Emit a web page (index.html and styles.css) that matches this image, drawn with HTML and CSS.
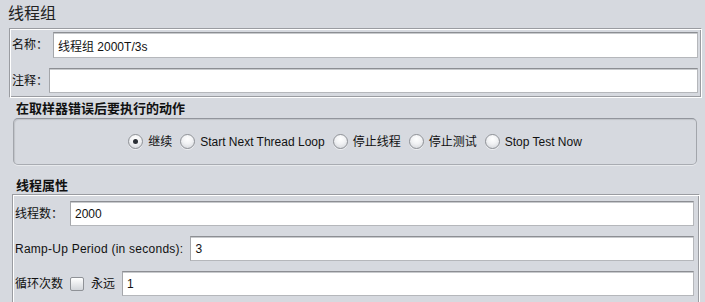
FILE: index.html
```html
<!DOCTYPE html>
<html lang="zh-CN">
<head>
<meta charset="utf-8">
<title>线程组</title>
<link rel="stylesheet" href="styles.css">
</head>
<body>
<div class="page">
  <div class="title">线程组</div>

  <div class="etched box-top">
    <div class="row row-name">
      <span class="label">名称：</span>
      <div class="field field-tall">线程组 2000T/3s</div>
    </div>
    <div class="row row-comment">
      <span class="label">注释：</span>
      <div class="field"></div>
    </div>
  </div>

  <div class="section-title first">在取样器错误后要执行的动作</div>
  <div class="titled-panel">
    <label class="radio-item"><span class="radio checked"></span><span class="rtext">继续</span></label>
    <label class="radio-item"><span class="radio"></span><span class="rtext">Start Next Thread Loop</span></label>
    <label class="radio-item"><span class="radio"></span><span class="rtext">停止线程</span></label>
    <label class="radio-item"><span class="radio"></span><span class="rtext">停止测试</span></label>
    <label class="radio-item"><span class="radio"></span><span class="rtext">Stop Test Now</span></label>
  </div>

  <div class="section-title second">线程属性</div>
  <div class="etched box-props">
    <div class="row">
      <span class="label">线程数：</span>
      <div class="field">2000</div>
    </div>
    <div class="row">
      <span class="label label-wide">Ramp-Up Period (in seconds):</span>
      <div class="field">3</div>
    </div>
    <div class="row">
      <span class="label">循环次数</span>
      <span class="checkbox"></span>
      <span class="label">永远</span>
      <div class="field">1</div>
    </div>
  </div>
</div>
</body>
</html>
```

FILE: styles.css
```css
html, body {
  margin: 0;
  padding: 0;
  background: #d6d9df;
  overflow: hidden;
}

body {
  font-family: "Liberation Sans", "Noto Sans CJK SC", sans-serif;
  font-size: 12px;
  color: #111;
  width: 705px;
  height: 302px;
}

.page {
  display: flex;
  flex-direction: column;
}

.title {
  height: 28px;
  line-height: 24px;
  padding-left: 8px;
  font-family: "Noto Sans CJK SC", sans-serif;
  font-size: 16px;
  color: #222;
}

.etched {
  border: 1px solid;
  border-color: #9a9ca1 #ffffff #ffffff #9a9ca1;
  box-shadow: inset 1px 1px 0 #ffffff, inset -1px -1px 0 #9a9ca1;
}

.box-top {
  margin: 0 3px 0 9px;
  padding: 3px 3px 4px 2px;
  display: flex;
  flex-direction: column;
  gap: 10px;
}

.row {
  display: flex;
  align-items: center;
  gap: 7px;
  height: 25px;
}

.row-name { height: 26px; gap: 5px; }
.row-comment { gap: 1px; }

.label {
  white-space: nowrap;
  line-height: 16px;
}

.label-wide { letter-spacing: 0.25px; }

.field {
  flex: 1;
  align-self: stretch;
  background: #ffffff;
  border: 1px solid #b5b7bb;
  border-top-color: #8c8e93;
  border-left-color: #a4a6aa;
  box-shadow: inset 0 1px 0 #c8cacd;
  padding: 0 4px;
  display: flex;
  align-items: center;
  white-space: nowrap;
  color: #111;
}

.section-title {
  padding-left: 16px;
  height: 16px;
  line-height: 16px;
  font-weight: bold;
  font-size: 13px;
  color: #111;
}

.section-title.first { margin-top: 3px; margin-bottom: 1px; }
.section-title.second { margin-top: 13px; margin-bottom: 0; }

.titled-panel {
  margin: 0 8px 0 13px;
  height: 45px;
  border: 1px solid #a2a5ab;
  border-top-color: #92959c;
  border-bottom-color: #a9acb2;
  border-radius: 5px;
  box-shadow: inset 1px 1px 1px rgba(0, 0, 0, 0.1), 0 1px 0 rgba(255, 255, 255, 0.45);
  display: flex;
  align-items: center;
  justify-content: center;
  gap: 8px;
}

.radio-item {
  display: flex;
  align-items: center;
  gap: 5px;
}

.rtext { line-height: 16px; white-space: nowrap; }

.radio {
  width: 13px;
  height: 13px;
  border-radius: 50%;
  border: 1px solid #8f9297;
  background: radial-gradient(circle at 50% 30%, #ffffff 0%, #f1f2f4 45%, #cfd2d7 100%);
  box-shadow: 0 1px 0 rgba(255, 255, 255, 0.6);
  position: relative;
  flex: none;
}

.radio.checked::after {
  content: "";
  position: absolute;
  left: 4px;
  top: 4px;
  width: 5px;
  height: 5px;
  border-radius: 50%;
  background: #2c3036;
}

.box-props {
  margin: 0 5px 0 12px;
  padding: 6px 5px 10px 2px;
  display: flex;
  flex-direction: column;
  gap: 10px;
}

.checkbox {
  width: 12px;
  height: 12px;
  border: 1px solid #8f9297;
  border-radius: 2px;
  background: linear-gradient(#ffffff, #d2d5da);
  flex: none;
}
```
